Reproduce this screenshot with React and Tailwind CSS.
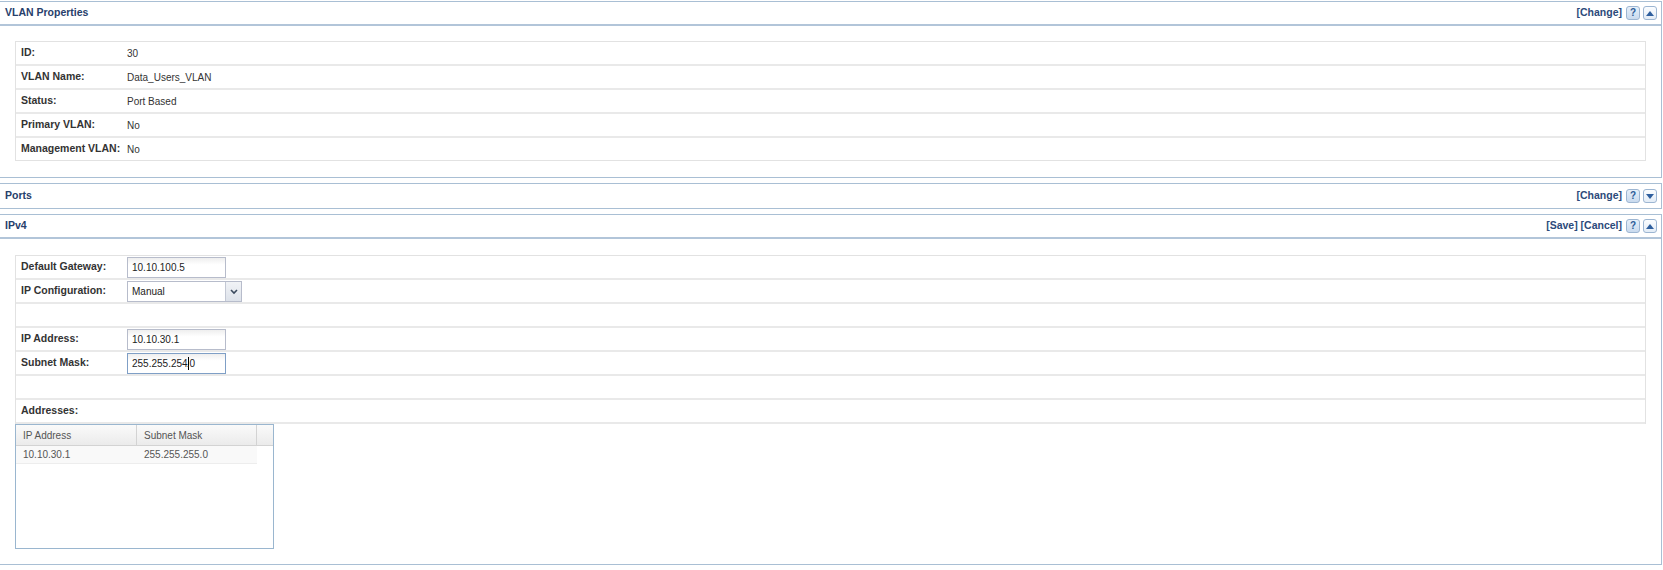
import React from 'react'

const font = "font-['Liberation_Sans',Arial,sans-serif]"

const HelpButton = () => (
  <span className="flex h-[14px] w-[14px] items-center justify-center rounded-[3px] border border-[#9db6d2] bg-[linear-gradient(to_bottom,#e6eff9,#c9daee)] text-[10px] font-bold leading-none text-[#2d5c98]">
    ?
  </span>
)

const ToggleButton = ({ open }) => (
  <span className="flex h-[14px] w-[14px] items-center justify-center rounded-[3px] border border-[#9db6d2] bg-[linear-gradient(to_bottom,#fbfdff,#e3ecf6)]">
    <svg width="8" height="5" viewBox="0 0 8 5">
      {open ? (
        <path d="M0 5 L4 0 L8 5 Z" fill="#2f5f9e" />
      ) : (
        <path d="M0 0 L8 0 L4 5 Z" fill="#2f5f9e" />
      )}
    </svg>
  </span>
)

const Panel = ({ title, actions, open, children }) => (
  <div className="mr-px border-t border-r border-b border-[#a9bfd4] bg-white">
    <div
      className={`flex h-[24px] items-center justify-between pl-[5px] pr-[4px] ${
        open ? 'border-b-2 border-[#b2c5d9]' : ''
      }`}
    >
      <span className="text-[10.5px] font-bold text-[#27406b]">{title}</span>
      <div className="flex items-center gap-[3px]">
        <span className="mr-[1px] text-[10.5px] font-bold text-[#2c4a7a]">
          {actions.map((a) => `[${a}]`).join(' ')}
        </span>
        <HelpButton />
        <ToggleButton open={open} />
      </div>
    </div>
    {open && children}
  </div>
)

const Row = ({ label, children, last }) => (
  <div className={`flex items-center ${last ? 'h-[22px]' : 'h-[24px] border-b-2 border-[#e9e9e9]'}`}>
    <div className="w-[107px] shrink-0 pl-[5px] text-[10.5px] font-bold text-[#333]">{label}</div>
    <div className="flex items-center pl-[4px] pt-px text-[10px] text-[#333]">{children}</div>
  </div>
)

const EmptyRow = () => <div className="h-[24px] border-b-2 border-[#e9e9e9]" />

const TextInput = ({ value, focused, cursorAt }) => (
  <div
    className={`flex h-[21px] w-[99px] items-center border bg-[linear-gradient(to_bottom,#eeeeee,#ffffff_35%)] px-[4px] text-[10px] text-[#222] ${
      focused ? 'border-[#7f9fc6]' : 'border-[#b7bccb]'
    }`}
  >
    {cursorAt != null ? (
      <>
        <span>{value.slice(0, cursorAt)}</span>
        <span className="-mr-[2px] h-[13px] w-px bg-black" />
        <span>{value.slice(cursorAt)}</span>
      </>
    ) : (
      value
    )}
  </div>
)

const Select = ({ value }) => (
  <div className="flex h-[21px] w-[115px] border border-[#b7bccb] bg-white text-[10px] text-[#222]">
    <div className="flex flex-1 items-center px-[4px]">{value}</div>
    <div className="flex w-[16px] items-center justify-center border-l border-[#c3c8d4] bg-[linear-gradient(to_bottom,#f1f3f6,#dde2ea)]">
      <svg width="8" height="6" viewBox="0 0 8 6">
        <path d="M1 1 L4 4 L7 1" stroke="#3b4a5e" strokeWidth="1.6" fill="none" />
      </svg>
    </div>
  </div>
)

const addresses = [{ ip: '10.10.30.1', mask: '255.255.255.0' }]

const AddressGrid = () => (
  <div className="h-[125px] w-[259px] border border-[#9ab6cf] bg-white text-[10px] text-[#555]">
    <div className="flex h-[21px] border-b border-[#d3d3d3] bg-[linear-gradient(to_bottom,#fafafa,#ebebeb)]">
      <div className="flex w-[121px] items-center border-r border-[#d3d3d3] pl-[7px]">IP Address</div>
      <div className="flex w-[120px] items-center border-r border-[#d3d3d3] pl-[7px]">Subnet Mask</div>
      <div className="flex-1" />
    </div>
    {addresses.map((r) => (
      <div key={r.ip} className="flex h-[18px] w-[241px] items-center border-b border-[#ededed] bg-[#f9f9f9]">
        <div className="w-[121px] pl-[7px]">{r.ip}</div>
        <div className="w-[120px] pl-[7px]">{r.mask}</div>
      </div>
    ))}
  </div>
)

export default function App() {
  return (
    <div className={`min-h-screen bg-white pt-px ${font}`}>
      <Panel title="VLAN Properties" actions={['Change']} open>
        <div className="px-[15px] pt-[15px] pb-[16px]">
          <div className="border border-[#e2e2e2]">
            <Row label="ID:">30</Row>
            <Row label="VLAN Name:">Data_Users_VLAN</Row>
            <Row label="Status:">Port Based</Row>
            <Row label="Primary VLAN:">No</Row>
            <Row label="Management VLAN:" last>
              No
            </Row>
          </div>
        </div>
      </Panel>

      <div className="mt-[5px]">
        <Panel title="Ports" actions={['Change']} />
      </div>

      <div className="mt-[5px]">
        <Panel title="IPv4" actions={['Save', 'Cancel']} open>
          <div className="px-[15px] pt-[16px] pb-[15px]">
            <div className="border border-b-0 border-[#e2e2e2]">
              <Row label="Default Gateway:">
                <TextInput value="10.10.100.5" />
              </Row>
              <Row label="IP Configuration:">
                <Select value="Manual" />
              </Row>
              <EmptyRow />
              <Row label="IP Address:">
                <TextInput value="10.10.30.1" />
              </Row>
              <Row label="Subnet Mask:">
                <TextInput value="255.255.254.0" focused cursorAt={11} />
              </Row>
              <EmptyRow />
              <Row label="Addresses:">{null}</Row>
            </div>
            <AddressGrid />
          </div>
        </Panel>
      </div>
    </div>
  )
}
